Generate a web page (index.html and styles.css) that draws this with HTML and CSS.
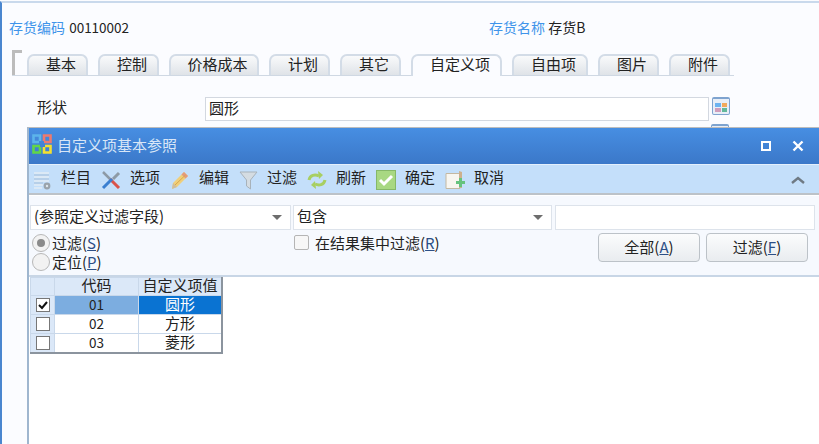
FILE: index.html
```html
<!DOCTYPE html>
<html lang="zh-CN">
<head>
  <meta charset="UTF-8">
  <title>存货档案</title>
  <link rel="stylesheet" href="styles.css">
</head>
<body>
  <div class="page">
    <!-- header fields -->
    <div class="head-row">
      <div class="head-field head-code"><span class="blue">存货编码</span> <span class="digits">00110002</span></div>
      <div class="head-field"><span class="blue">存货名称</span> <span>存货B</span></div>
    </div>

    <!-- tabs -->
    <div class="tabs">
      <div class="tab-corner"></div>
      <div class="tab w1">基本</div>
      <div class="tab w1">控制</div>
      <div class="tab w2">价格成本</div>
      <div class="tab w1">计划</div>
      <div class="tab w1">其它</div>
      <div class="tab tab-on">自定义项</div>
      <div class="tab w3">自由项</div>
      <div class="tab w1">图片</div>
      <div class="tab w1">附件</div>
    </div>

    <div class="form-row">
      <label class="form-label">形状</label>
      <div class="form-input">圆形</div>
      <div class="ref-btn"><i class="c1"></i><i class="c2"></i><i class="c3"></i><i class="c4"></i></div>
    </div>
    <div class="form-row2"><div class="ref-btn"></div></div>
  </div>

  <!-- dialog -->
  <div class="dialog">
    <div class="titlebar">
      <svg class="logo" width="20" height="20" viewBox="0 0 20 20" fill="none" stroke-width="2.6">
        <path d="M8 7V1.500H1.500V8H7" stroke="#5cb4ea"/>
        <path d="M12 8h6.500V1.500H12V7" stroke="#ee7a6e"/>
        <path d="M8 12H1.500v6.500H8V13" stroke="#62d648"/>
        <path d="M12 13v5.500h6.500V12H13" stroke="#f4e030"/>
      </svg>
      <span class="title">自定义项基本参照</span>
      <span class="win-max"></span>
      <svg class="win-close" width="12" height="12" viewBox="0 0 12 12"><path d="M1.500 1.500l9 9M10.500 1.500l-9 9" stroke="#fff" stroke-width="2.4"/></svg>
    </div>

    <div class="toolbar">
      <span class="tool">
        <svg width="19" height="20" viewBox="0 0 19 20"><path d="M1 3h15M1 7h15M1 11h15M1 15h9M1 18h8" stroke="#dbe9f6" stroke-width="2"/><path d="M1 5h15M1 9h15M1 13h9" stroke="#a9c0d8"/><circle cx="14" cy="16" r="3.400" fill="#9aa3ab"/><circle cx="14" cy="16" r="1.200" fill="#dfe6ec"/></svg>
        <span>栏目</span>
      </span>
      <span class="tool">
        <svg width="20" height="20" viewBox="0 0 20 20" fill="none"><path d="M2 2l7 7" stroke="#8d9aa6" stroke-width="2.500"/><path d="M9 9l9 9" stroke="#d9534a" stroke-width="3"/><path d="M18 3l-6 6" stroke="#8d9aa6" stroke-width="3"/><path d="M11 9l-9 9" stroke="#3a7fd0" stroke-width="3"/></svg>
        <span>选项</span>
      </span>
      <span class="tool">
        <svg width="20" height="20" viewBox="0 0 20 20"><path d="M14 2l4 4L7 17l-5 2 1-6z" fill="#efcf7c"/><path d="M14 2l4 4-2.500 2.500-4-4z" fill="#e39a7e"/><path d="M3 13l4 4-5 2z" fill="#cdbd9f"/><path d="M5 15L15.500 5" stroke="#d9a84a"/></svg>
        <span>编辑</span>
      </span>
      <span class="tool">
        <svg width="19" height="20" viewBox="0 0 19 20"><path d="M1 2h17l-6.500 8v9l-4-3v-6z" fill="#d4dce2" stroke="#a8b2ba"/></svg>
        <span>过滤</span>
      </span>
      <span class="tool">
        <svg width="20" height="20" viewBox="0 0 20 20" fill="none" stroke="#a8cf62" stroke-width="3"><path d="M2 10c1-5 6-6 10-4"/><path d="M11 1l5 4-4 4z" fill="#a8cf62" stroke="none"/><path d="M18 10c-1 5-6 6-10 4"/><path d="M9 19l-5-4 4-4z" fill="#a8cf62" stroke="none"/></svg>
        <span>刷新</span>
      </span>
      <span class="tool">
        <svg width="20" height="20" viewBox="0 0 20 20"><rect x="0.500" y="0.500" width="19" height="19" fill="#a8d882" stroke="#86b868"/><path d="M4 10l4 4 8-8" fill="none" stroke="#fff" stroke-width="3"/></svg>
        <span>确定</span>
      </span>
      <span class="tool">
        <svg width="20" height="20" viewBox="0 0 20 20"><path d="M1 3.500h14v15H1z" fill="#f8f6f0" stroke="#c4b8a2"/><path d="M14 1l3 1v16h-3z" fill="#cdb08e"/><path d="M11 11h3V8h3v3h3v3h-3v3h-3v-3h-3z" fill="#66c37e"/></svg>
        <span>取消</span>
      </span>
      <svg class="collapse" width="14" height="8" viewBox="0 0 14 8"><path d="M1 7l6-5 6 5" fill="none" stroke="#6f7a84" stroke-width="2.400"/></svg>
    </div>

    <div class="filter">
      <div class="filter-row">
        <div class="combo combo-a">(参照定义过滤字段)<b></b></div>
        <div class="combo combo-b">包含<b></b></div>
        <div class="combo combo-c"></div>
      </div>
      <div class="filter-opts">
        <div class="radios">
          <div class="radio-row"><span class="radio radio-on"></span>过滤(<u>S</u>)</div>
          <div class="radio-row"><span class="radio"></span>定位(<u>P</u>)</div>
        </div>
        <div class="check-row"><span class="check"></span>在结果集中过滤(<u>R</u>)</div>
        <div class="btns">
          <div class="btn">全部(<u>A</u>)</div>
          <div class="btn">过滤(<u>F</u>)</div>
        </div>
      </div>
    </div>

    <div class="list">
      <table class="grid">
        <tr class="grid-head"><th class="c-box"></th><th class="c-code">代码</th><th class="c-val">自定义项值</th></tr>
        <tr class="row-sel"><td class="c-box"><span class="cb">
          <svg width="10" height="10" viewBox="0 0 10 10"><path d="M1 5l3 3 5-6" fill="none" stroke="#111" stroke-width="2"/></svg>
        </span></td><td class="c-code num">01</td><td class="c-val">圆形</td></tr>
        <tr><td class="c-box"><span class="cb"></span></td><td class="c-code num">02</td><td class="c-val">方形</td></tr>
        <tr><td class="c-box"><span class="cb"></span></td><td class="c-code num">03</td><td class="c-val">菱形</td></tr>
      </table>
    </div>
  </div>
</body>
</html>
```

FILE: styles.css
```css
html, body { margin:0; height:444px; overflow:hidden; }
body {
  position:relative; background:#fbfcff; color:#222;
  font-family:"Noto Sans CJK SC", "Liberation Sans", sans-serif; font-size:15px;
}
u { text-decoration:underline; color:#2c4f86; }
.page {
  height:443px; box-sizing:border-box;
  border-top:2px solid #c9d9ec; border-left:2px solid #4a86cf; margin-top:1px;
}
.blue { color:#3f94ea; }

.head-row { display:flex; padding:14px 0 0 7px; height:20px; line-height:20px; font-size:14px; }
.head-code { width:480px; }
.digits { font-size:13.5px; margin-left:1px; }

.tabs {
  display:flex; align-items:flex-end; gap:10px; height:25px; width:722px;
  margin:13px 0 0 10px; border-bottom:1px solid #cfd8e3;
}
.tab-corner {
  width:10px; height:25px; box-sizing:border-box; margin-right:-5px; align-self:flex-start;
  border:solid #bcbcbc; border-width:3px 0 0 3px;
}
.tab {
  height:21px; line-height:16px; text-align:center; box-sizing:border-box; padding-left:7px;
  border:2px solid #d3dce7; border-bottom:0; border-radius:7px 7px 0 0;
  background:linear-gradient(#f9fafb, #dfe3e8);
}
.w1 { width:61px; }
.w2 { width:90px; }
.w3 { width:76px; }
.tab-on { width:91px; height:22px; background:#fbfcff; margin-bottom:-1px; }

.form-row { display:flex; align-items:center; margin-top:21px; }
.form-label { width:203px; padding-left:35px; box-sizing:border-box; margin-top:-5px; }
.form-input {
  width:504px; height:24px; line-height:20px; padding-left:3px; box-sizing:border-box;
  background:#fff; border:1px solid #d3d8e0;
}
.ref-btn {
  width:18px; height:18px; margin-left:3px; padding:4px 2px 2px; box-sizing:border-box;
  display:grid; grid-template-columns:1fr 1fr; gap:1px;
  background:#e8eef7; border:1px solid #7ea3cf; border-top-width:2px; border-radius:2px;
}
.form-row .ref-btn { margin-top:-6px; }
.ref-btn i { display:block; }
.c1 { background:#6db3f0; } .c2 { background:#f2a95c; }
.c3 { background:#cf9dbb; } .c4 { background:#62b89c; }
.form-row2 { margin:3px 0 0 706px; }

.dialog {
  position:absolute; left:27px; top:127px; width:792px; height:317px;
  border-top:1px solid #bcbcbc; border-left:2px solid #9fb6cf; box-sizing:border-box;
  background:#fff;
}
.titlebar {
  display:flex; align-items:center; height:36px; padding:0 0 4px 3px; box-sizing:border-box;
  background:linear-gradient(#478ee2, #3b78c9); color:#d8e6f7;
}
.logo { margin-right:6px; }
.title { flex:1; margin-left:-1px; }
.win-max { width:6px; height:6px; border:2px solid #fff; margin:3px 21px 0 0; }
.win-close { margin:3px 15px 0 0; }

.toolbar {
  display:flex; align-items:center; height:31px; padding:0 0 2px 4px; box-sizing:border-box; position:relative;
  background:#c4dffa; border-top:1px solid #e3effc; border-bottom:2px solid #bcc2c8;
}
.tool { display:flex; align-items:center; gap:9px; margin-right:10px; }
.tool svg { margin-top:3px; }
.tool span { margin-bottom:3px; }
.collapse { position:absolute; right:14px; top:11px; }

.filter {
  height:82px; box-sizing:border-box; padding:9px 3px 0 1px;
  background:#f6f9fe; border-top:1px solid #fff; border-bottom:2px solid #c8d6e6;
}
.filter-row { display:flex; gap:2px; height:25px; }
.combo {
  position:relative; background:#fff; border:1px solid #dde3eb; box-sizing:border-box;
  line-height:20px; padding-left:3px;
}
.combo b {
  position:absolute; right:8px; top:9px; width:0; height:0;
  border:5px solid transparent; border-top-color:#6d6d6d; border-bottom:0;
}
.combo-a { width:261px; }
.combo-b { width:259px; }
.combo-c { width:260px; margin-left:1px; }

.filter-opts { display:flex; }
.radios { width:263px; margin-top:3px; }
.radio-row { display:flex; align-items:center; height:19px; line-height:14px; }
.radio {
  width:18px; height:18px; margin:1px 2px 0 2px; box-sizing:border-box; position:relative;
  border:1px solid #b8b8b8; border-radius:50%; background:#f2f2f2;
}
.radio-on::after { content:""; position:absolute; left:4px; top:4px; width:8px; height:8px; border-radius:50%; background:#8a8a8a; }
.check-row { display:flex; align-items:center; width:305px; height:19px; margin-top:3px; line-height:17px; }
.check { width:15px; height:15px; box-sizing:border-box; margin:0 6px 0 1px; border:1px solid #b5b5b5; border-radius:2px; background:#f7f7f7; }
.btns { display:flex; gap:6px; margin-top:3px; }
.btn {
  width:102px; height:29px; line-height:25px; text-align:center; box-sizing:border-box;
  border:1px solid #bcc2c8; border-radius:4px; background:linear-gradient(#fbfcfd, #e9ecef);
}

.list { padding:0 0 0 1px; background:#fff; }
.grid { border-collapse:collapse; border-right:2px solid #8b949e; border-bottom:2px solid #8b949e; }
.grid th, .grid td {
  border:1px solid #c9d8ea; padding:0; height:18px; line-height:16px;
  text-align:center; font-weight:normal; vertical-align:top;
}
.c-box { width:23px; background:#dbe8f8; }
.c-code { width:83px; }
.c-val { width:82px; }
.grid .grid-head th { background:#dbe8f8; height:17px; line-height:14px; }
.num { font-size:13.5px; }
.row-sel .c-code { background:#7cade0; }
.row-sel .c-val { background:#0a73d2; color:#fff; }
.cb {
  display:inline-flex; align-items:center; justify-content:center; margin-top:2px;
  width:14px; height:14px; box-sizing:border-box; border:1px solid #777; background:#fff;
}
```
